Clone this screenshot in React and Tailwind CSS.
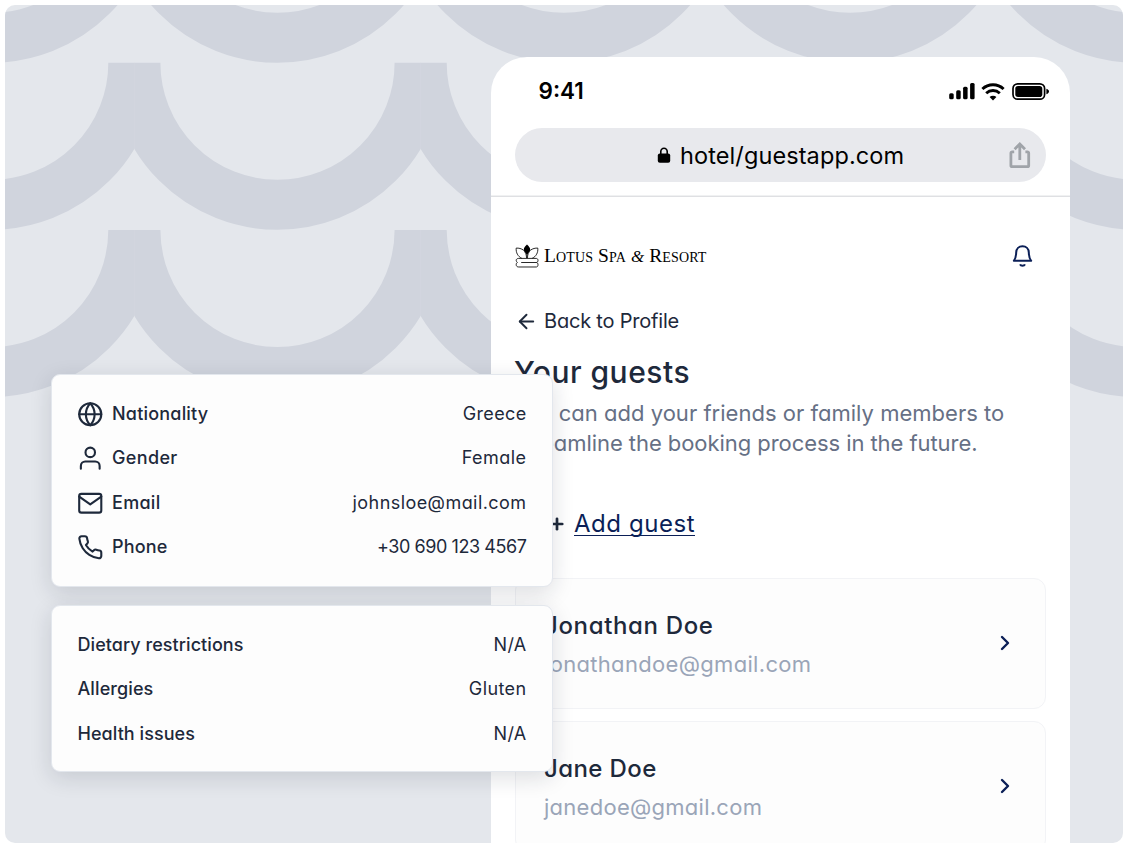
import { ArrowLeft, ChevronRight, Plus } from 'lucide-react';

const CENTERS_X = [-8.8, 277.5, 563.8, 850.1, 1136.4];
const ROWS_Y = [-104.3, 62.7, 229.9];

function Scallops() {
  return (
    <svg className="absolute inset-0" width="1128" height="848" viewBox="0 0 1128 848" aria-hidden="true">
      <defs>
        {ROWS_Y.map((cy, r) =>
          CENTERS_X.map((cx, c) => (
            <clipPath id={`cell-${r}-${c}`} key={`${r}-${c}`}>
              <rect x={cx - 143.3} y={cy} width="286.6" height="170" />
            </clipPath>
          ))
        )}
      </defs>
      {ROWS_Y.map((cy, r) =>
        CENTERS_X.map((cx, c) => (
          <circle
            key={`${r}-${c}`}
            cx={cx}
            cy={cy}
            r="142.1"
            fill="none"
            stroke="#d0d4dd"
            strokeWidth="50"
            clipPath={`url(#cell-${r}-${c})`}
          />
        ))
      )}
    </svg>
  );
}

function StatusIcons() {
  return (
    <svg width="102" height="20" viewBox="0 0 102 20" aria-hidden="true">
      <rect x="1.2" y="11.2" width="4.5" height="6" rx="1.5" />
      <rect x="8.2" y="8.2" width="4.5" height="9" rx="1.5" />
      <rect x="15.1" y="4.8" width="4.5" height="12.4" rx="1.5" />
      <rect x="22.1" y="1" width="4.5" height="16.2" rx="1.5" />
      <g fill="none" stroke="#000" strokeWidth="2.9">
        <path d="M34.4 7a15.4 15.4 0 0 1 21.2 0" />
        <path d="M38.2 11.2a9.9 9.9 0 0 1 13.6 0" />
      </g>
      <path d="M45 18.6l-3.4-3.5a4.8 4.8 0 0 1 6.8 0z" />
      <rect x="65" y="1.8" width="31.6" height="15.4" rx="4.8" fill="none" stroke="#000" strokeWidth="1.7" />
      <rect x="67.3" y="4" width="27" height="11" rx="2.8" />
      <path d="M98.4 6.8c1.7.6 2.6 1.5 2.6 2.7s-.9 2.1-2.6 2.7z" />
    </svg>
  );
}

function LockIcon() {
  return (
    <svg width="14" height="16" viewBox="0 0 14 16" aria-hidden="true">
      <rect x="0.8" y="6.4" width="12.4" height="9.4" rx="2" />
      <path d="M3.8 7.4V4.6a3.2 3.4 0 0 1 6.4 0v2.8" fill="none" stroke="#000" strokeWidth="1.6" />
    </svg>
  );
}

function ShareIcon() {
  return (
    <svg width="22" height="28" viewBox="0 0 22 28" fill="none" stroke="#a0a4a9" strokeWidth="2.8" aria-hidden="true">
      <path d="M5.2 10.9H3.2a1.3 1.3 0 0 0-1.3 1.3v12.2a1.3 1.3 0 0 0 1.3 1.3h15.2a1.3 1.3 0 0 0 1.3-1.3V12.2a1.3 1.3 0 0 0-1.3-1.3h-2" />
      <path d="M10.8 19V3.2M5.6 8.2 10.8 3 16 8.2" />
    </svg>
  );
}

function LotusMark() {
  return (
    <svg width="24" height="24" viewBox="0 0 24 24" fill="none" stroke="#111" strokeWidth="0.9" aria-hidden="true">
      <path d="M12 .4c1.800 1.800 3.200 3.300 3.200 5.200 0 1.900-1.600 3.300-2.600 4.600V14h-1.200v-3.800C10.400 8.900 8.800 7.500 8.800 5.600 8.800 3.700 10.200 2.200 12 .4z" fill="#000" stroke="none" />
      <path d="M8.600 6.200C6.200 4.500 3.800 4 1.200 4.100c-.4 4.500 1.600 8.300 5.600 10.200" />
      <path d="M15.400 6.200c2.400-1.700 4.800-2.200 7.400-2.100.4 4.500-1.600 8.300-5.600 10.200" />
      <path d="M8.600 6.200c1.700 1.800 2.800 4.600 3 8M15.400 6.200c-1.700 1.800-2.800 4.600-3 8" strokeWidth="0.7" />
      <path d="M3.700 14.400h17.600c1 0 1.700.8 1.700 2s-.7 2.100-1.700 2.100H6.200M3.700 14.400c-1.500 0-2.500.8-2.500 1.900 0 .9.400 1.600 1.200 2-.8.500-1.200 1.400-1.200 2.400 0 1.400 1 2.300 2.500 2.300h17.600c1.100 0 1.700-.9 1.700-2.300s-.7-2.200-1.700-2.200" />
    </svg>
  );
}

function BellIcon() {
  return (
    <svg width="25" height="26" viewBox="0 0 25 26" fill="none" stroke="#0b1f57" strokeWidth="2" strokeLinejoin="round" aria-hidden="true">
      <path d="M3.800 17.800C5.700 15.700 6.100 13 6.200 9.400 6.300 5.600 8.900 3.200 12.500 3.200s6.200 2.400 6.300 6.200c.1 3.600.5 6.300 2.400 8.400z" />
      <path d="M10 21.300c.8 1.900 4.200 1.900 5 0" />
    </svg>
  );
}

const ROW_ICONS = {
  globe: (
    <>
      <circle cx="12" cy="12" r="10" />
      <path d="M2 12h20M12 2a15.300 15.300 0 0 1 4 10 15.300 15.300 0 0 1-4 10 15.300 15.300 0 0 1-4-10 15.300 15.300 0 0 1 4-10z" />
    </>
  ),
  user: (
    <>
      <path d="M20.500 21.500v-2.500a4 4 0 0 0-4-4h-9a4 4 0 0 0-4 4v2.500" />
      <circle cx="12" cy="6.700" r="4.300" />
    </>
  ),
  mail: (
    <>
      <rect x="2" y="3.500" width="20" height="17" rx="2" />
      <path d="M22 6l-10 7L2 6" />
    </>
  ),
  phone: (
    <path d="M22 16.920v3a2 2 0 0 1-2.180 2 19.790 19.790 0 0 1-8.630-3.070 19.500 19.500 0 0 1-6-6 19.790 19.790 0 0 1-3.070-8.670A2 2 0 0 1 4.110 2h3a2 2 0 0 1 2 1.720 12.840 12.840 0 0 0 .7 2.810 2 2 0 0 1-.45 2.110L8.090 9.910a16 16 0 0 0 6 6l1.270-1.270a2 2 0 0 1 2.110-.45 12.840 12.840 0 0 0 2.810.7A2 2 0 0 1 22 16.920z" />
  ),
};

function RowIcon({ name }) {
  return (
    <svg
      className="mr-[8.5px] shrink-0"
      width="26.5"
      height="26.5"
      viewBox="0 0 24 24"
      fill="none"
      stroke="#1e293b"
      strokeWidth="1.9"
      strokeLinecap="round"
      strokeLinejoin="round"
      aria-hidden="true"
    >
      {ROW_ICONS[name]}
    </svg>
  );
}

function InfoRow({ icon, label, labelClass, value, valueClass }) {
  return (
    <div className="flex h-[44.5px] items-center">
      {icon && <RowIcon name={icon} />}
      <span className={`font-medium ${labelClass}`}>{label}</span>
      <span className={`ml-auto ${valueClass}`}>{value}</span>
    </div>
  );
}

function FloatingCard({ className, children }) {
  return (
    <section
      className={`w-[502px] rounded-[9px] border border-[#e3e7ed] bg-[#fdfdfd] pr-[25.5px] text-lg text-[#1e293b] shadow-[0_6px_22px_rgba(20,30,50,0.14)] ${className}`}
    >
      {children}
    </section>
  );
}

function GuestCard({ name, nameClass, email, emailClass }) {
  return (
    <article className="flex h-[131px] items-center rounded-xl border-[1.5px] border-[#f2f3f6] bg-[#fdfdfd] pl-[28px] pr-[28.5px]">
      <div className="flex flex-col">
        <h2 className={`text-2xl leading-8 font-medium text-[#1e293b] ${nameClass}`}>{name}</h2>
        <p className={`mt-[8px] text-[22px] leading-[28px] text-[#9aa5b8] ${emailClass}`}>{email}</p>
      </div>
      <ChevronRight className="mb-px ml-auto" size={24} strokeWidth={2.4} color="#0b1f57" />
    </article>
  );
}

export default function App() {
  return (
    <div className="relative h-[848px] w-[1128px] overflow-hidden bg-white p-[5px] font-[Inter,sans-serif] [font-feature-settings:'cv11']">
      <div className="h-[838px] w-[1118px] overflow-hidden rounded-[10px] bg-[#e4e7ec]">
        <div className="absolute inset-[5px] overflow-hidden rounded-[10px]">
          <div className="absolute -top-[5px] -left-[5px] h-[848px] w-[1128px]">
            <Scallops />
          </div>
        </div>

        <main className="relative mt-[52px] ml-[486px] h-[786px] w-[579px] overflow-hidden rounded-t-[36px] bg-white">
          <div className="flex h-[69px] items-center justify-between pr-5 pl-[47.5px] [font-feature-settings:normal]">
            <span className="text-[22.5px] leading-none font-semibold text-black">9:41</span>
            <StatusIcons />
          </div>

          <div className="mx-6 mt-[2px] flex h-[54px] items-center rounded-full bg-[#e8e9ed] pr-[15px] pl-[142px] [font-feature-settings:normal]">
            <LockIcon />
            <span className="ml-[9px] pt-[2px] text-[23.5px] leading-none tracking-[0.1px] whitespace-nowrap text-black">hotel/guestapp.com</span>
            <span className="ml-auto">
              <ShareIcon />
            </span>
          </div>
          <div className="mt-[13px] h-px bg-[#f0f1f2]" />
          <div className="h-px bg-[#dfe0e3]" />

          <div className="px-6">
            <header className="mt-[45px] flex h-[28px] items-center">
              <LotusMark />
              <span className="ml-[5px] font-['Liberation_Serif',serif] text-[19.5px] leading-none tracking-[0.12px] whitespace-nowrap text-black [font-variant-caps:small-caps]">
                Lotus Spa <i className="text-[17px]">&amp;</i> Resort
              </span>
              <span className="mr-[11px] ml-auto">
                <BellIcon />
              </span>
            </header>

            <a className="mt-[37px] flex h-[28px] items-center text-xl text-[#1e293b]">
              <ArrowLeft size={23} strokeWidth={2} />
              <span className="ml-[6px] tracking-[-0.2px]">Back to Profile</span>
            </a>

            <h1 className="mt-[17px] -ml-px text-[30px] leading-[40px] font-medium tracking-[0.5px] text-[#1e293b]">Your guests</h1>
            <p className="mt-[6px] text-[22px] leading-[30px] whitespace-nowrap text-[#667085]">
              <span className="-ml-[2px] tracking-[0.02px]">You can add your friends or family members to</span>
              <br />
              <span className="-ml-[0.5px] tracking-[-0.06px]">streamline the booking process in the future.</span>
            </p>

            <button className="mt-[50px] ml-[33px] flex h-[32px] items-center text-2xl text-[#0b1f57]">
              <Plus size={18} strokeWidth={3.6} color="#1e293b" />
              <span className="ml-[8px] border-b border-[#0b1f57] leading-[23px] tracking-[0.55px]">Add guest</span>
            </button>

            <div className="mt-[38px] flex flex-col gap-[12px]">
              <GuestCard name="Jonathan Doe" nameClass="tracking-[0.65px]" email="jonathandoe@gmail.com" emailClass="tracking-[0.32px]" />
              <GuestCard name="Jane Doe" nameClass="tracking-[0.4px]" email="janedoe@gmail.com" emailClass="tracking-[0.27px]" />
            </div>
          </div>
        </main>
      </div>

      <aside className="absolute top-[374px] left-[51px] flex flex-col gap-[18px]">
        <FloatingCard className="pt-[16.6px] pb-[16.4px] pl-[25px]">
          <InfoRow icon="globe" label="Nationality" labelClass="tracking-[0.2px]" value="Greece" valueClass="tracking-[0.35px]" />
          <InfoRow icon="user" label="Gender" labelClass="tracking-[0.35px]" value="Female" valueClass="tracking-[0.45px]" />
          <InfoRow icon="mail" label="Email" labelClass="tracking-[0.3px]" value="johnsloe@mail.com" valueClass="tracking-[0.44px]" />
          <InfoRow icon="phone" label="Phone" labelClass="tracking-[0.15px]" value="+30 690 123 4567" valueClass="tracking-[-0.43px]" />
        </FloatingCard>
        <FloatingCard className="pt-[16.6px] pb-[15.4px] pl-[25.5px]">
          <InfoRow label="Dietary restrictions" labelClass="tracking-[0.06px]" value="N/A" valueClass="tracking-[0.3px]" />
          <InfoRow label="Allergies" labelClass="tracking-[0.1px]" value="Gluten" valueClass="tracking-[0.4px]" />
          <InfoRow label="Health issues" labelClass="tracking-[0.06px]" value="N/A" valueClass="tracking-[0.3px]" />
        </FloatingCard>
      </aside>
    </div>
  );
}
